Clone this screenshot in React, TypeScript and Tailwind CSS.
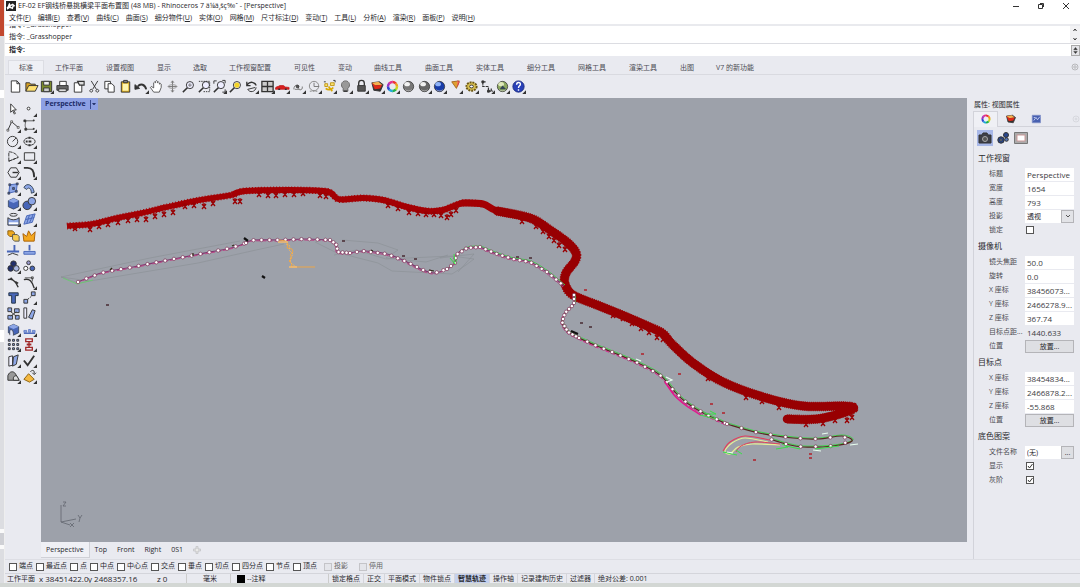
import { useId } from "react"
import type { ReactNode } from "react"
import clsx from "clsx"

type Point = [number, number]
type Tool = { name: string; art: ReactNode; flyout?: boolean }

const MENUS = [
  ["文件", "F"], ["编辑", "E"], ["查看", "V"], ["曲线", "C"], ["曲面", "S"], ["细分物件", "U"],
  ["实体", "O"], ["网格", "M"], ["尺寸标注", "D"], ["变动", "T"], ["工具", "L"], ["分析", "A"],
  ["渲染", "R"], ["面板", "P"], ["说明", "H"],
]

const TOOL_TABS = [
  "标准", "工作平面", "设置视图", "显示", "选取", "工作视窗配置", "可见性", "变动", "曲线工具",
  "曲面工具", "实体工具", "细分工具", "网格工具", "渲染工具", "出图", "V7 的新功能",
]

const SNAPS = ["端点", "最近点", "点", "中点", "中心点", "交点", "垂点", "切点", "四分点", "节点", "顶点"]

const K = "#333"
const B = "#4866b8"
const LB = "#8da6e6"

function Icon({ children, flyout }: { children: ReactNode; flyout?: boolean }) {
  return (
    <svg viewBox="0 0 16 16" className="size-full" fill="none" stroke={K} strokeWidth="1" aria-hidden="true">
      {children}
      {flyout && <path d="M16 12v4h-4z" fill={K} stroke="none" />}
    </svg>
  )
}

function Ball({ fill, shine = "#fff" }: { fill: string; shine?: string }) {
  return (
    <>
      <circle cx="8" cy="8" r="5.5" fill={fill} stroke="#333" strokeWidth=".8" />
      <ellipse cx="6.5" cy="5.5" rx="3" ry="2.2" fill={shine} stroke="none" opacity=".9" />
      <path d="M4.500 11.500c2 1.500 5 1.500 7 0" stroke="#ddd" strokeWidth=".8" opacity=".7" />
    </>
  )
}

function ColorWheel() {
  const colors = ["#e33", "#f0a020", "#c8d820", "#20b050", "#20a8d8", "#3048d0", "#a030c0", "#e03090"]
  return (
    <>
      {colors.map((color, i) => (
        <circle
          key={color}
          cx="8"
          cy="8"
          r="4.8"
          stroke={color}
          strokeWidth="2.6"
          strokeDasharray="3.9 40"
          transform={`rotate(${i * 45 - 90} 8 8)`}
        />
      ))}
    </>
  )
}

function Lens({ children }: { children?: ReactNode }) {
  return (
    <>
      <path d="M7 9 2 14" strokeWidth="1.6" />
      <circle cx="9.5" cy="6.5" r="3.8" fill="#eef" />
      {children}
    </>
  )
}

const layerArt = (
  <>
    <path d="M2 4l8-1 4 3-3 7-7-1z" fill="#333" />
    <path d="M2 4l7-1 4 3-8 1z" fill="#f4b050" stroke="none" />
    <path d="M2 4l4 3 7-1-2 4-6 1z" fill="#e02818" stroke="none" />
  </>
)

const STANDARD_TOOLS: Tool[] = [
  { name: "新建", art: <path d="M3.5 2h6l3 3v9h-9zM9.5 2v3h3" fill="#fff" /> },
  { name: "打开", art: <><path d="M2 13V4h4l1 1.500h5V8" fill="#d8a020" /><path d="M2 13l3-6h10l-3 6z" fill="#ffe070" /></> },
  { name: "保存", flyout: true, art: <><path d="M2.5 2.500h11v11h-11z" fill="#7c8b2c" /><path d="M5 2.500h6v4H5z" fill="#eee" /><path d="M5 9.500h6v4H5z" fill="#ccc" /></> },
  { name: "打印", art: <><path d="M5 7V2.500h7V7" fill="#fff" /><path d="M2 7h12v5H2z" fill="#666" /><path d="M4 10.500h8v3H4z" fill="#ddd" /></> },
  { name: "文件属性", art: <><path d="M3.5 4h8v10h-8z" fill="#fff" /><path d="M7 2.500h7v4H9z" fill="#ddd" strokeWidth="1.2" /></> },
  { name: "剪切", art: <path d="M4.5 2 10 11M11.5 2 6 11M4.5 11a1.500 1.500 0 1 0 .1 0M11 11a1.500 1.500 0 1 0 .1 0" /> },
  { name: "复制", art: <><path d="M3 2.500h6v8H3z" fill="#fff" /><path d="M6.5 5h4l2.500 2.500V14H6.500z" fill="#fff" /></> },
  { name: "粘贴", art: <><path d="M3.5 3h9v11h-9z" fill="#e0b020" /><path d="M5 5h6v7.500H5z" fill="#fff6b0" stroke="none" /><path d="M6 1.500h4v2.500H6z" fill="#888" /></> },
  { name: "复原", flyout: true, art: <><path d="M4 8c3-4 8-2 9 3" strokeWidth="2" /><path d="M1 6v5l5-1z" fill={K} /></> },
  { name: "平移", art: <path d="M5 14 1.500 9l1-1L5 9.500V4l1-.8L7 4V2.500l1-.8 1 .8V4l1-.8 1 .8v1.500l1-.8 1 .8V9l-2 5z" fill="#fff" strokeWidth=".8" /> },
  { name: "旋转视图", art: <><path d="M8 2v12M3 8h10M6.500 4 8 2l1.500 2M6.500 12 8 14l1.500-2" stroke="#777" /><ellipse cx="8" cy="8" rx="4.5" ry="2" stroke="#999" /></> },
  { name: "动态缩放", art: <Lens><path d="M9.5 4.500v4M7.500 6.500h4" stroke="#777" /></Lens> },
  { name: "框选缩放", art: <><Lens /><path d="M2 2.500h11.500v11H7" strokeDasharray="1.5 1" /></> },
  { name: "缩放至最大范围", flyout: true, art: <><Lens /><path d="M2 5V2h3M11 1.500h3v3M14 11v3h-3" /></> },
  { name: "缩放至选取物件", art: <><Lens /><circle cx="9.5" cy="6.5" r="2.8" fill="#f4d428" stroke="none" /></> },
  { name: "复原视图", flyout: true, art: <><path d="M3 3v4h4M3.500 6c3-4 8-3 9.500 1" strokeWidth="1.4" /><path d="M13 9c-1 5-7 6-9 2l8-2" /></> },
  { name: "四视图", flyout: true, art: <path d="M2 2.500h12v11H2zM8 2.500v11M2 8h12" fill="#ccc" strokeWidth="1.4" /> },
  { name: "右视图", flyout: true, art: <><path d="M.5 9.500c1-2 3-1 4.500-2.500h4l2 1.500 4 .5v2H.5z" fill="#d92020" stroke="#b11" strokeWidth=".7" /><path d="M3.5 11h2M10.500 11h2" strokeWidth="1.6" /></> },
  { name: "设置工作平面", flyout: true, art: <><path d="M3 11c0-5 5-6 5-2s5 3 4-1M4 11h5" stroke="#777" /><circle cx="7" cy="8" r="1.4" fill="#555" /></> },
  { name: "设置视图中心", flyout: true, art: <><circle cx="7.5" cy="7.5" r="5" stroke="#888" /><path d="M7.5 4v4H13" stroke="#777" /><path d="M3 13h8" stroke="#888" strokeDasharray="2 1" /></> },
  { name: "选取", flyout: true, art: <><path d="M3 5h3v3H3zM9 4h4v3H9z" fill="#f8e070" stroke="#c09818" /><path d="M4 10c2 2 6 2 8-1M7 8l4 5" stroke="#d8a800" strokeWidth="1.8" /><path d="M2 3h2M12 1.500h2v2" /></> },
  { name: "隐藏物件", flyout: true, art: <><path d="M5.5 10C2 7 4 2 8 2s6 5 2.500 8v3h-5z" fill="#999" stroke="#666" /><path d="M6 13h4" strokeWidth="1.5" /></> },
  { name: "锁定物件", flyout: true, art: <><path d="M5 7V4.500a3 3 0 0 1 6 0V7" strokeWidth="1.4" /><path d="M4 7h8v6H4z" fill="#555" /></> },
  { name: "图层", flyout: true, art: layerArt },
  { name: "物件属性", flyout: true, art: <ColorWheel /> },
  { name: "着色", art: <Ball fill="#777" /> },
  { name: "渲染模式", flyout: true, art: <Ball fill="#666" /> },
  { name: "渲染", flyout: true, art: <Ball fill="#183ca8" shine="#9cc0ff" /> },
  { name: "聚光灯", flyout: true, art: <><path d="M4 3l8-1-3 8z" fill="#e0a030" stroke="#a66a20" /><path d="M10 2l2 1-2 5" fill="#f66" stroke="#c44" /></> },
  { name: "选项", flyout: true, art: <><ellipse cx="8" cy="8" rx="5.5" ry="4.5" fill="#d8c050" stroke="#6b5714" strokeDasharray="2 1" strokeWidth="2" /><ellipse cx="8" cy="8" rx="2" ry="1.5" fill="#fff" /></> },
  { name: "尺寸标注", flyout: true, art: <><path d="M3 3v5h6v5h5M3 3h4M12 10v4" strokeDasharray="3 1" strokeWidth="1.3" /><path d="M2 2h2v2H2zM8 12h2v2H8z" fill={K} /></> },
  { name: "Grasshopper", flyout: true, art: <><Ball fill="#8ca860" shine="#e8f0c8" /><path d="M5 11l3-4 4 4z" fill="#345" stroke="none" /></> },
  { name: "说明", flyout: true, art: <><circle cx="8" cy="8" r="6" fill="#2840b8" stroke="#1c2c80" /><path d="M6 6c0-3 4-3 4-.5C10 7.500 8 7 8 9.500M8 11v1.500" stroke="#fff" strokeWidth="1.5" /></> },
]

const cube = (
  <>
    <path d="M2.5 5 8 2.500 13.500 5v6.500L8 14l-5.500-2.500z" fill={B} stroke="#234" strokeWidth=".7" />
    <path d="M2.5 5 8 2.500 13.500 5 8 7.500z" fill={LB} stroke="none" />
  </>
)

const SIDE_TOOLS: Tool[] = [
  { name: "取消选取", art: <path d="M5 2v9l2-2 2 4 1-1-2-3.500h3z" fill="#fff" /> },
  { name: "点", flyout: true, art: <circle cx="7" cy="7" r="1.5" fill="#fff" /> },
  { name: "多重直线", flyout: true, art: <><path d="M2 13 6 4l7 6" /><path d="M1 12h2v2H1zM5 3h2v2H5zM12 9h2v2h-2z" fill="#fff" strokeWidth=".7" /></> },
  { name: "控制点曲线", flyout: true, art: <><path d="M13 3H4c0 3-2 5 1 9h8" strokeWidth=".8" /><path d="M2 2h2v2H2zM12 2h1v1h-1zM3 11h2v2H3zM12 11h1v1h-1z" fill={K} strokeWidth=".8" /></> },
  { name: "圆", flyout: true, art: <><circle cx="7" cy="8" r="5.5" /><path d="m7 8 4-4" /></> },
  { name: "椭圆", flyout: true, art: <><ellipse cx="8" cy="8" rx="6" ry="4" /><path d="M8 3v10M4 8h8" strokeDasharray="2 2" strokeWidth="2" /></> },
  { name: "圆弧", flyout: true, art: <path d="M3 13V3c5 0 9 3 10 6zm0 0 10-4" strokeDasharray="4 1" /> },
  { name: "矩形", flyout: true, art: <path d="M2.5 4h11v8h-11z" /> },
  { name: "多边形", flyout: true, art: <><path d="m2 8 3-5h6l3 5-3 5H5z" /><path d="M7 8h6" strokeWidth="1.5" /></> },
  { name: "曲线圆角", flyout: true, art: <path d="M2 3h4c5 0 7 3 7 10" strokeWidth="2" /> },
  { name: "曲面", flyout: true, art: <><path d="m4 4 8-1-1 8-8 2z" fill={LB} stroke={B} /><path d="M3 3h2v2H3zM11 2h2v2h-2zM2 12h2v2H2zM10 10h2v2h-2zM7 7h2v2H7z" fill={B} strokeWidth=".7" /></> },
  { name: "旋转成形", flyout: true, art: <path d="M2 7c3-6 10-3 11 5l-3 1c0-5-3-7-5-4z" fill={LB} stroke="#345" /> },
  { name: "立方体", flyout: true, art: cube },
  { name: "布尔运算", flyout: true, art: <><circle cx="5.5" cy="10" r="4.5" fill={B} /><circle cx="10.5" cy="5.5" r="4" fill={LB} /></> },
  { name: "投影曲线", flyout: true, art: <><ellipse cx="8" cy="3" rx="4" ry="1.5" /><path d="M2 6v8h12V6c-3 3-9 3-12 0z" fill={LB} /><path d="M3 12h10" stroke="#fff" strokeWidth="2" /></> },
  { name: "网格", flyout: true, art: <><path d="m5 4 9-2-3 9-9 2z" fill={LB} stroke={B} /><path d="m8 3-3 9.500M12 2.500 8 11.500M4 8l9-2" stroke={B} /></> },
  { name: "组合", art: <><path d="M2 3h5l2 2v4H4L2 7z" fill="#eca820" stroke="#8a5c0c" /><path d="M7 7h5l2 2v5H9l-2-2z" fill="#f8cc50" stroke="#555" /></> },
  { name: "炸开", art: <path d="M2 14 1 6l4 3 2-6 3 5 4-4-1 10z" fill="#f4a820" stroke="#a86008" /> },
  { name: "修剪", art: <><path d="M9 2v6M1 9h13" stroke={B} strokeWidth="2" /><path d="m2 13 5-2 6 2" /></> },
  { name: "分割", art: <><path d="M8 2v6" stroke={B} strokeWidth="2" /><path d="M2 9h12v3H2z" fill={LB} stroke={B} /></> },
  { name: "群组", flyout: true, art: <><circle cx="8" cy="5" r="3" fill="#22306c" /><circle cx="5" cy="10" r="3" fill="#22306c" /><circle cx="11" cy="10" r="3" fill="#aab8e0" /></> },
  { name: "取消群组", art: <><circle cx="7" cy="4" r="2" fill="#99c" /><circle cx="4" cy="10" r="2.2" fill="#fff" /><circle cx="11" cy="10" r="2.5" fill={B} /></> },
  { name: "编辑点", art: <path d="M2 5c5-2 9 3 11 8M5 3l3 3M10 7l3 2" strokeWidth="1.5" /> },
  { name: "控制点", flyout: true, art: <><path d="M2 5c6-2 9 2 11 9" strokeWidth="1.5" /><path d="M3 3h8v4M10 2h2v2h-2z" strokeWidth=".8" /></> },
  { name: "文字", art: <path d="M3 3h10v3h-3v8H6V6H3z" fill={B} stroke="#234" /> },
  { name: "移动", flyout: true, art: <><path d="M2 10h4v4H2zM10 2h4v4h-4z" fill={LB} /><path d="m6 10 5-4" strokeDasharray="2 1" /></> },
  { name: "复制物件", art: <><path d="M2 2h4v4H2zM9 3h5v4H9zM2 10h5v4H2zM10 10h4v4h-4z" fill={LB} /><path d="m5 6 6 5M11 6 5 11" /></> },
  { name: "旋转", art: <><path d="M2 2h3v11H2z" fill="#eef" /><path d="m7 12 4-8 3 1-3 9z" fill={LB} /></> },
  { name: "实体编辑", flyout: true, art: <>{cube}<path d="M4 14V9c2-2 4 0 4 5" fill="#dfe5fa" strokeWidth=".7" /></> },
  { name: "对齐", flyout: true, art: <><path d="M2 12h12" stroke={B} strokeWidth="1.5" /><path d="M2 9h3v2H2zM7 8h2v3H7zM11 9h3v2h-3z" fill={LB} stroke={B} strokeWidth=".7" /></> },
  { name: "阵列", flyout: true, art: <path d="M2.5 2.500h2v2h-2zM7 2.500h2v2H7zM11.500 2.500h2v2h-2zM2.500 7h2v2h-2zM7 7h2v2H7zM11.500 7h2v2h-2zM2.500 11.500h2v2h-2zM7 11.500h2v2H7zM11.500 11.500h2v2h-2z" fill={LB} /> },
  { name: "分析方向", flyout: true, art: <><path d="M4 2h7v3H4zM4 11h7v3H4zM7.500 5v6" stroke="#a02828" strokeWidth="1.4" /><path d="M5 8h5" stroke="#a02828" strokeWidth="2" /></> },
  { name: "弯曲", flyout: true, art: <><path d="m3 4 4-1v10l-4 1z" fill="#eef" /><path d="m8 4 5-2-2 10-4 2z" fill={LB} /></> },
  { name: "检查物件", flyout: true, art: <path d="m2 8 4 5 7-10" strokeWidth="2" /> },
  { name: "群组实体", flyout: true, art: <><path d="M2 12V7c2-5 6-5 8-2l4 7z" fill="#999" /><path d="M8 12c-1-4 2-6 4-4l2 4z" fill="#ddd" /></> },
  { name: "属性匹配", flyout: true, art: <><path d="m2 11 5-6 6 6-5 3z" fill="#f4b840" stroke="#8a6010" /><path d="M9 3c1-2 4-2 4 0v2M11 4l2 2 2-2" /></> },
]

const BAND: Point[] = [
  [67, 226], [92, 224], [117, 218], [142, 213], [167, 207], [200, 200], [232, 195], [245, 191], [290, 190], [323, 191],
  [331, 193], [338, 199], [350, 199], [363, 198], [383, 200], [407, 207], [427, 211], [443, 210], [463, 203],
  [483, 204], [497, 211], [530, 218], [550, 230], [568, 243], [576, 253], [575, 261], [566, 273],
  [565, 284], [573, 295], [597, 305], [617, 313], [645, 325], [662, 333], [672, 344], [693, 363], [723, 382],
  [763, 397], [803, 406], [843, 406], [854, 408], [843, 413], [817, 419], [787, 419],
]

const ROUTE_WEST: Point[] = [[78, 282], [90, 277], [105, 272], [133, 267], [168, 260], [200, 254], [231, 248], [246, 243]]
const ROUTE_NORTH: Point[] = [[246, 243], [254, 240], [280, 240], [305, 239], [330, 240]]
const ROUTE_STEP: Point[] = [[330, 240], [336, 244], [338, 252], [350, 253]]
const ROUTE_MIDDLE: Point[] = [[350, 253], [363, 251], [387, 254], [407, 262], [423, 270], [435, 273], [447, 269]]
const ROUTE_TURN: Point[] = [[447, 269], [455, 263], [456, 255], [467, 248], [480, 247]]
const ROUTE_EAST: Point[] = [[480, 247], [497, 254], [513, 259], [530, 262], [547, 272], [564, 286]]
const ROUTE_BEND: Point[] = [[574, 295], [574, 304], [565, 313], [562, 322], [568, 332], [579, 338]]
const ROUTE_SOUTH: Point[] = [[579, 338], [597, 346], [612, 352], [638, 363], [660, 375], [675, 392], [687, 403], [705, 414], [727, 424]]
const ROUTE_LOOP: Point[] = [
  [727, 424], [759, 433], [793, 438], [818, 439], [842, 436], [852, 441], [833, 446], [803, 447], [786, 444], [770, 439],
]

const ROUTES: { points: Point[]; step: number }[] = [
  { points: ROUTE_WEST, step: 9 },
  { points: ROUTE_NORTH, step: 8 },
  { points: ROUTE_STEP, step: 4 },
  { points: ROUTE_MIDDLE, step: 7 },
  { points: ROUTE_TURN, step: 5 },
  { points: ROUTE_EAST, step: 6 },
  { points: ROUTE_BEND, step: 4 },
  { points: ROUTE_SOUTH, step: 9 },
  { points: ROUTE_LOOP, step: 15 },
]

const CROSSES: Point[] = [
  [75, 228], [90, 229], [99, 226], [108, 224], [118, 222], [128, 220], [137, 219], [146, 219], [155, 216], [164, 214],
  [173, 212], [185, 206], [194, 205], [204, 206], [213, 203], [235, 201], [240, 201], [259, 194], [268, 195], [276, 195],
  [285, 194], [294, 194], [303, 193], [320, 195], [326, 196], [388, 205], [398, 208], [409, 212], [418, 213],
  [426, 214], [434, 214], [441, 215], [447, 217], [451, 214], [456, 210], [522, 221], [536, 226], [543, 231],
  [549, 236], [554, 240], [559, 245], [565, 249], [613, 315], [623, 318], [632, 323], [641, 328], [649, 332], [657, 337],
  [663, 339], [708, 378], [746, 397], [762, 401], [779, 407], [806, 424], [823, 423], [835, 420], [847, 420], [852, 417],
]

const FLAGS: Point[] = [
  [586, 290], [582, 323], [591, 327], [643, 354], [680, 374], [712, 404], [724, 413], [755, 460], [811, 454],
  [811, 458], [344, 241], [404, 256], [416, 259], [518, 257], [531, 258], [108, 305],
]

/** Smooth path through every point of the list. */
function smooth(points: Point[], dx = 0, dy = 0) {
  const at = (i: number) => points[Math.max(0, Math.min(points.length - 1, i))]
  let d = `M${points[0][0] + dx} ${points[0][1] + dy}`
  for (let i = 0; i < points.length - 1; i++) {
    const [a, b, c, e] = [at(i - 1), at(i), at(i + 1), at(i + 2)]
    d += `C${b[0] + (c[0] - a[0]) / 6 + dx} ${b[1] + (c[1] - a[1]) / 6 + dy} `
    d += `${c[0] - (e[0] - b[0]) / 6 + dx} ${c[1] - (e[1] - b[1]) / 6 + dy} ${c[0] + dx} ${c[1] + dy}`
  }
  return d
}

/** Points at an even distance from each other along the polyline. */
function sample(points: Point[], step: number): Point[] {
  const out: Point[] = []
  let rest = 0
  for (let i = 1; i < points.length; i++) {
    const [x0, y0] = points[i - 1]
    const [x1, y1] = points[i]
    const length = Math.hypot(x1 - x0, y1 - y0)
    let t = rest
    for (; t < length; t += step) {
      out.push([x0 + ((x1 - x0) * t) / length, y0 + ((y1 - y0) * t) / length])
    }
    rest = t - length
  }
  return out
}

function Scene() {
  return (
    <svg viewBox="41 98 926 444" className="block h-full w-full" fill="none" role="img" aria-label="Perspective">
      <g stroke="#868c90" strokeWidth=".5">
        <path d="M61 277 150 258l90-17M61 277l17 6 120-20 58-13 28-6M61 277l28 4M315 242l20 10 43 11 14 8 60 3 14-9 8-6-22-3-66 3-30-9-22 5" />
        <path d="M342 240l36 3 20 7-12 8 40 4 22-7M440 258l34-4-16 18" />
      </g>
      <path d="M63 278l14 6 16-4" stroke="#65d069" strokeWidth=".8" />

      {/* retaining band */}
      <path d={smooth(BAND.slice(0, 7))} stroke="#a40004" strokeWidth="5.5" />
      <path d={smooth(BAND.slice(6, 20))} stroke="#a40004" strokeWidth="6" />
      <path d={smooth(BAND.slice(18, 22))} stroke="#a40004" strokeWidth="7" strokeLinecap="round" />
      <path d={smooth(BAND.slice(20))} stroke="#980003" strokeWidth="8.5" strokeLinejoin="round" strokeLinecap="round" />
      <path d={smooth(BAND.slice(0, 20))} stroke="#a40004" strokeWidth="7" strokeDasharray="1 2" />
      <path d={smooth(BAND.slice(20))} stroke="#980003" strokeWidth="9.5" strokeDasharray="1 1" />
      {CROSSES.map(([x, y]) => (
        <path key={`${x}-${y}`} d={`M${x - 2} ${y - 2}l4 5m0-5l-4 5M${x} ${y - 3}v5`} stroke="#980003" strokeWidth="1.3" />
      ))}

      {/* centre line and its stations */}
      {ROUTES.map(({ points, step }, i) => (
        <g key={step * 100 + i}>
          {i > 3 && <path d={smooth(points, 1, -1)} stroke="#3fd24c" strokeWidth="1" />}
          <path d={smooth(points)} stroke={i > 5 ? "#55291f" : "#803a70"} strokeWidth="1.2" />
          {i < 8 && <path d={smooth(points, -1, 1)} stroke={i === 7 ? "#e4148c" : "#bb4285"} strokeWidth="1" strokeDasharray="4 2" />}
          {sample(points, step).map(([x, y]) => (
            <circle key={`${x}-${y}`} cx={x} cy={y} r="1.7" fill="#fff" stroke="#702047" strokeWidth=".6" />
          ))}
        </g>
      ))}
      <path d={smooth([[665, 382], [675, 396], [688, 407], [701, 415]])} stroke="#e4148c" strokeWidth="1.5" />
      <path d={smooth([[770, 440], [745, 436], [730, 442], [723, 451]])} stroke="#e0405c" strokeWidth="1.2" />
      <path d={smooth([[768, 442], [745, 438], [732, 443], [725, 451], [730, 454], [738, 447], [752, 444], [780, 445]])} stroke="#e6ee98" strokeWidth="1.2" />
      <path d={smooth([[736, 452], [741, 446], [755, 442], [780, 444]])} stroke="#e0405c" />
      <path d="M723 452l14 3M736 450l6 4M776 449l12-2-6-3M704 414h12l-6-3M450 258l5 6-1-10M700 415l16 4M815 449l24-3M786 446l14 3" stroke="#38e048" />
      <path d="M666 377l6 3-5 2M636 359l5 2M822 434l6-1M850 445l8-1M813 450l8 1M727 452l6 1" stroke="#e8fff0" strokeWidth="1.2" />

      {/* side branch */}
      <path d="M279 240l7 1 2 3-1 4 5 1 1 3-3 3 2 3-3 3 3 3-1 3h24" stroke="#eca649" strokeWidth="1" />
      <path d="M286 244l4 2-1 4 4 4-3 5 1 4 5 4" stroke="#f2b45c" strokeWidth="1" strokeDasharray="2 1" />
      <path d="M289 267h8M278 242h10" stroke="#f2bc70" strokeWidth="1.5" />
      <path d="M244 238l4 3M571 331l7 3M262 276l3 2" stroke="#111" strokeWidth="2.2" />
      <path d="M429 270l5 1M371 250l2 1M110 270l2-2M193 253v3M232 246l2-1" stroke="#302c18" strokeWidth="1.2" />
      {FLAGS.map(([x, y]) => (
        <path key={`${x}-${y}`} d={`M${x - 2} ${y}h3`} stroke={x > 600 || x === 586 ? "#b02028" : "#472a30"} strokeWidth="1.5" />
      ))}

      {/* axis gizmo */}
      <path d="M61 505v17l15-3M61 522l9 3M63 502h3l-3 4h3M78 515l2 3 2-3M80 518l-1 4M70 523l4 4M74 523l-4 4" stroke="#62666e" strokeWidth=".8" />
    </svg>
  )
}

function ToolButton({ tool }: { tool: Tool }) {
  return (
    <button type="button" aria-label={tool.name} className="size-[15px]">
      <Icon flyout={tool.flyout}>{tool.art}</Icon>
    </button>
  )
}

function Section({ title, children }: { title: string; children: ReactNode }) {
  return (
    <section>
      <h3 className="h-[18px] pl-1 text-[8px] leading-[18px]">{title}</h3>
      {children}
    </section>
  )
}

function Row({ label, id, children }: { label: string; id?: string; children: ReactNode }) {
  return (
    <div className="flex h-[14px] items-center pl-[15px]">
      <label htmlFor={id} className="w-9 shrink-0 text-[7px] leading-[14px] whitespace-nowrap text-[#4c4c52]">
        {label}
      </label>
      <div className="flex h-[14px] min-w-0 flex-1 items-center">{children}</div>
    </div>
  )
}

function FieldRow({ label, value, readOnly }: { label: string; value: string; readOnly?: boolean }) {
  const id = useId()
  return (
    <Row label={label} id={id}>
      <input
        id={id}
        defaultValue={value}
        readOnly={readOnly}
        className={clsx("h-[13px] w-full min-w-0 pl-[2px] text-[8px] text-[#3c3c42]", !readOnly && "bg-white")}
      />
    </Row>
  )
}

function CheckRow({ label, checked }: { label: string; checked?: boolean }) {
  const id = useId()
  return (
    <Row label={label} id={id}>
      <Tick id={id} checked={checked} />
    </Row>
  )
}

function Tick({ id, checked, disabled }: { id?: string; checked?: boolean; disabled?: boolean }) {
  return (
    <span className={clsx("grid size-2 shrink-0", id && "ml-px")}>
      <input
        id={id}
        type="checkbox"
        defaultChecked={checked}
        disabled={disabled}
        className="peer col-start-1 row-start-1 size-2 appearance-none border border-[#555] bg-white disabled:border-[#c4c4c8] disabled:bg-[#e4e5ea]"
      />
      <svg viewBox="0 0 8 8" className="pointer-events-none invisible col-start-1 row-start-1 size-2 peer-checked:visible" fill="none" stroke="#333" aria-hidden="true">
        <path d="M2 4l1.500 2L6.500 2" />
      </svg>
    </span>
  )
}

function PlaceRow() {
  return (
    <Row label="位置">
      <button type="button" className="h-[13px] w-full border border-[#b4b4b8] bg-[#dedfe3] text-[7px] leading-[11px]">
        放置...
      </button>
    </Row>
  )
}

function PropertiesPanel() {
  const projection = useId()
  const file = useId()
  return (
    <aside className="flex w-[113px] shrink-0 flex-col pl-[6px]">
      <h2 className="h-[13px] pl-px text-[7px] leading-[13px]">属性: 视图属性</h2>
      <div className="flex h-4 items-center border-b border-[#d2d3da]">
        <button type="button" aria-label="属性" className="flex h-4 w-[25px] items-center justify-center border-x border-t border-[#d2d3da] bg-[#eff0f5]">
          <span className="size-3"><Icon><ColorWheel /></Icon></span>
        </button>
        <button type="button" aria-label="图层" className="flex w-[25px] justify-center">
          <span className="size-3"><Icon>{layerArt}</Icon></span>
        </button>
        <button type="button" aria-label="渲染" className="flex w-[25px] justify-center">
          <span className="size-3">
            <Icon><path d="M3 3h11v10H3z" fill="#4860b0" stroke="#8090c8" /><path d="M5 10l3-4 2 3 3-4M5 6h2" stroke="#dfe6ff" /></Icon>
          </span>
        </button>
        <button type="button" aria-label="面板选项" className="ml-auto size-2">
          <Icon><circle cx="8" cy="8" r="6" stroke="#c4c6cd" /><circle cx="8" cy="8" r="2" stroke="#c4c6cd" /></Icon>
        </button>
      </div>
      <div className="flex-1 border-l border-[#d2d3da] pr-[6px]">
        <div className="flex h-[22px] items-center gap-[2px] pl-[3px]">
          <button type="button" aria-label="视图" className="size-4 bg-[#a8b8e8]">
            <Icon><path d="M2 5h3l1-2h4l1 2h3v8H2z" fill="#3d3f48" /><circle cx="8" cy="9" r="2.5" fill="#555" stroke="#aaa" /></Icon>
          </button>
          <button type="button" aria-label="材质" className="size-4">
            <Icon><circle cx="6" cy="10" r="3.2" fill="#28468c" /><circle cx="11" cy="5" r="2.5" fill="#28468c" /><circle cx="11.5" cy="9.5" r="1.8" fill="#5678b8" /><circle cx="6" cy="10" r="1" fill="#fff" /></Icon>
          </button>
          <button type="button" aria-label="底图" className="size-4">
            <Icon><path d="M1.5 2.500h13v11h-13z" fill="#aaa" stroke="#777" /><path d="M4 5h8v6H4z" fill="#fff" stroke="#c99" /></Icon>
          </button>
        </div>

        <Section title="工作视窗">
          <FieldRow label="标题" value="Perspective" />
          <FieldRow label="宽度" value="1654" />
          <FieldRow label="高度" value="793" />
          <Row label="投影" id={projection}>
            <div className="grid h-[13px] w-full">
              <select id={projection} className="col-start-1 row-start-1 h-[13px] w-full appearance-none bg-white pl-[2px] text-[7px] leading-[13px]">
                <option>透视</option>
              </select>
              <span className="pointer-events-none col-start-1 row-start-1 flex size-[13px] items-center justify-center justify-self-end border border-[#b4b4b8] bg-[#e2e3e7]">
                <svg viewBox="0 0 8 8" className="size-2" fill="none" stroke="#555" aria-hidden="true"><path d="M2 3l2 2 2-2" /></svg>
              </span>
            </div>
          </Row>
          <CheckRow label="锁定" />
        </Section>

        <Section title="摄像机">
          <FieldRow label="镜头焦距" value="50.0" />
          <FieldRow label="旋转" value="0.0" />
          <FieldRow label="X 座标" value="38456073..." />
          <FieldRow label="Y 座标" value="2466278.9..." />
          <FieldRow label="Z 座标" value="367.74" />
          <FieldRow label="目标点距..." value="1440.633" readOnly />
          <PlaceRow />
        </Section>

        <Section title="目标点">
          <FieldRow label="X 座标" value="38454834..." />
          <FieldRow label="Y 座标" value="2466878.2..." />
          <FieldRow label="Z 座标" value="-55.868" />
          <PlaceRow />
        </Section>

        <Section title="底色图案">
          <Row label="文件名称" id={file}>
            <input id={file} defaultValue="(无)" className="h-[13px] w-full min-w-0 flex-1 bg-white pl-[2px] text-[7px]" />
            <button type="button" aria-label="浏览" className="h-[13px] w-[13px] shrink-0 border border-[#b4b4b8] bg-[#dedfe3] text-[7px] leading-[9px]">...</button>
          </Row>
          <CheckRow label="显示" checked />
          <CheckRow label="灰阶" checked />
        </Section>
      </div>
    </aside>
  )
}

function TitleBar() {
  return (
    <header className="flex h-3 items-center bg-white text-[7px] leading-3">
      <svg viewBox="0 0 16 16" className="ml-px size-[10px]" aria-hidden="true">
        <path d="M0 0h16v16H0z" fill="#222" />
        <path d="M1 10c3-1 2-6 5-7l1 3 4-2 4 4-3 1-1 4-5-2-4 3z" fill="#fff" />
        <path d="M7 8l4-1-2 3z" fill="#222" />
      </svg>
      <h1 className="ml-[2px] whitespace-pre">EF-02 EF钢线桥悬挑横梁平面布置图 (48 MB) - Rhinoceros 7 ä¼ä¸šç‰ˆ - [Perspective]</h1>
      <div className="ml-auto flex gap-[17px] pr-[10px]">
        <button type="button" aria-label="最小化" className="size-2">
          <svg viewBox="0 0 8 8" fill="none" stroke="#333"><path d="M1 4.500h6" /></svg>
        </button>
        <button type="button" aria-label="还原" className="size-2">
          <svg viewBox="0 0 8 8" fill="none" stroke="#333"><path d="M1.5 2.500h4v4h-4zM3 1.500h3.500V5" /></svg>
        </button>
        <button type="button" aria-label="关闭" className="size-2">
          <svg viewBox="0 0 8 8" fill="none" stroke="#333"><path d="M1 1l6 6M7 1 1 7" /></svg>
        </button>
      </div>
    </header>
  )
}

function CommandArea() {
  return (
    <div className="border-t-2 border-[#e9eaee] bg-white text-[7px]">
      <div className="flex h-[18px] border-b border-[#dcdde2]">
        <div className="flex flex-1 flex-col justify-end overflow-hidden pl-1 leading-3">
          <p>指令: _Grasshopper</p>
          <p>指令: _Grasshopper</p>
        </div>
        <div className="flex w-[10px] flex-col justify-around bg-[#f2f2f4]">
          <button type="button" aria-label="向上滚动" className="h-2"><Icon><path d="M5 10l3-4 3 4" strokeWidth="2" /></Icon></button>
          <button type="button" aria-label="向下滚动" className="h-2"><Icon><path d="M5 6l3 4 3-4" strokeWidth="2" /></Icon></button>
        </div>
      </div>
      <div className="flex h-3 items-center">
        <label htmlFor="command" className="pl-1 font-semibold">指令:</label>
        <input id="command" className="h-3 flex-1 pl-1 outline-none" />
        <button type="button" aria-label="指令历史" className="h-[11px] w-[9px] border border-[#aaa] bg-[#e4e4e8]">
          <Icon><path d="M4 6l4-5 4 5zM4 10l4 5 4-5z" fill="#333" /></Icon>
        </button>
      </div>
    </div>
  )
}

function Toolbars() {
  return (
    <>
      <div className="flex h-[19px] items-stretch border-b border-[#d9dae0] pt-1 pl-[3px]" role="tablist">
        {TOOL_TABS.map((tab, i) => (
          <button
            key={tab}
            type="button"
            role="tab"
            aria-selected={i === 0}
            className={clsx(
              "border-x border-t px-[10px] pt-px text-[7px] leading-3 whitespace-nowrap text-[#4c4c54]",
              i === 0 ? "border-[#dcdde3] bg-[#eff0f5]" : "border-transparent",
              tab.length > 2 && "pr-[11px]",
            )}
          >
            {tab}
          </button>
        ))}
        <button type="button" aria-label="工具列选项" className="mt-[3px] mr-px ml-auto size-2">
          <Icon><circle cx="8" cy="8" r="6" stroke="#888" /><circle cx="8" cy="8" r="2.5" stroke="#888" /></Icon>
        </button>
      </div>
      <div className="flex h-[23px] items-center px-[3px]">
        <div className="flex w-[518px] justify-between">
          {STANDARD_TOOLS.map((tool) => <ToolButton key={tool.name} tool={tool} />)}
        </div>
      </div>
    </>
  )
}

function ViewportTabs() {
  return (
    <nav className="flex h-[17px] items-start text-[7px] leading-4">
      <button type="button" className="h-4 border-r border-b border-[#d0d1d7] bg-[#eff0f5] px-[5px]">Perspective</button>
      {["Top", "Front", "Right", "0S1"].map((view) => (
        <button key={view} type="button" className="px-[5px]">{view}</button>
      ))}
      <button type="button" aria-label="新增视图" className="mt-1 ml-[5px] size-2">
        <Icon><path d="M8 1v14M1 8h14" stroke="#aaa" strokeWidth="5" /><path d="M8 2v12M2 8h12" stroke="#fff" strokeWidth="2" /></Icon>
      </button>
    </nav>
  )
}

function StatusBars() {
  const panes = ["锁定格点", "正交", "平面模式", "物件锁点", "智慧轨迹", "操作轴", "记录建构历史", "过滤器"]
  return (
    <footer className="text-[7px]">
      <div className="flex h-[14px] items-center gap-[3px] border-t border-[#dddee4] pl-1">
        {SNAPS.map((snap) => (
          <label key={snap} className="flex items-center gap-[2px]"><Tick />{snap}</label>
        ))}
        <label className="ml-1 flex items-center gap-[2px] text-[#666]"><Tick disabled />投影</label>
        <label className="ml-2 flex items-center gap-[2px] text-[#666]"><Tick disabled />停用</label>
      </div>
      <div className="flex h-[10px] items-stretch border-t border-[#d4d5db] leading-[9px] whitespace-nowrap">
        <button type="button" className="w-[34px] pl-[2px] text-left">工作平面</button>
        <span className="w-[49px] text-[8px]">x 38451422.0</span>
        <span className="w-[69px] text-[8px]">y 2468357.16</span>
        <span className="w-[30px] border-r border-[#ccc] text-[8px]">z 0</span>
        <span className="w-[44px] border-r border-[#ccc] pl-4">毫米</span>
        <button type="button" className="flex w-[98px] items-center border-r border-[#ccc] pl-[6px]">
          <span className="mr-[2px] size-2 bg-black" />--注释
        </button>
        {panes.map((pane) => (
          <button
            key={pane}
            type="button"
            className={clsx("border-r border-[#d4d5db] px-[3px]", pane === "智慧轨迹" && "bg-[#c5d1ee] font-bold")}
          >
            {pane}
          </button>
        ))}
        <span className="pl-[3px]">绝对公差: 0.001</span>
      </div>
    </footer>
  )
}

export default function App() {
  return (
    <div className="flex h-screen flex-col overflow-hidden bg-[#e9eaf0] font-['Open_Sans','Noto_Sans_CJK_SC',sans-serif] text-[#28282c]">
      <div className="flex min-h-0 flex-1">
        <div className="flex w-[5px] shrink-0 flex-col border-r border-[#eee] bg-[#dcdde1]">
          <div className="h-9 bg-[#c2482e]" />
          <div className="h-[54px]" />
          <div className="h-2 bg-white" />
          <div className="h-[232px]" />
          <div className="h-3 bg-white" />
          <div className="mt-auto mb-[34px] h-5 border-y-4 border-[#fafafa] bg-[#cfd0d5]" />
        </div>
        <div className="flex min-w-0 flex-1 flex-col">
          <TitleBar />
          <nav className="flex h-3 items-center gap-[7px] bg-white pl-1 text-[7px] leading-3">
            {MENUS.map(([name, key]) => (
              <button key={name} type="button" className="whitespace-nowrap">
                {name}(<u>{key}</u>)
              </button>
            ))}
          </nav>
          <CommandArea />
          <Toolbars />
          <div className="flex min-h-0 flex-1">
            <div className="w-9 shrink-0 pt-1">
              <div className="grid h-[282px] w-8 grid-cols-2 grid-rows-18 place-items-center">
                {SIDE_TOOLS.map((tool) => <ToolButton key={tool.name} tool={tool} />)}
              </div>
            </div>
            <div className="flex min-w-0 flex-1 flex-col">
              <main className="relative min-h-0 flex-1 bg-[#9da1aa]">
                <Scene />
                <button type="button" className="absolute top-0 left-0 flex h-3 items-center bg-[#8da0e4] pl-1 text-[7px] leading-3 font-bold text-[#202c68]">
                  Perspective
                  <span className="ml-1 flex h-[9px] w-2 items-center justify-center border-l border-[#384a90]">
                    <svg viewBox="0 0 6 4" className="w-1" fill="#27356f" aria-hidden="true"><path d="M0 0h6L3 4z" /></svg>
                  </span>
                </button>
              </main>
              <ViewportTabs />
            </div>
            <PropertiesPanel />
          </div>
          <StatusBars />
        </div>
      </div>
      <div className="h-1 shrink-0 bg-[#d3d7d4]" />
    </div>
  )
}
